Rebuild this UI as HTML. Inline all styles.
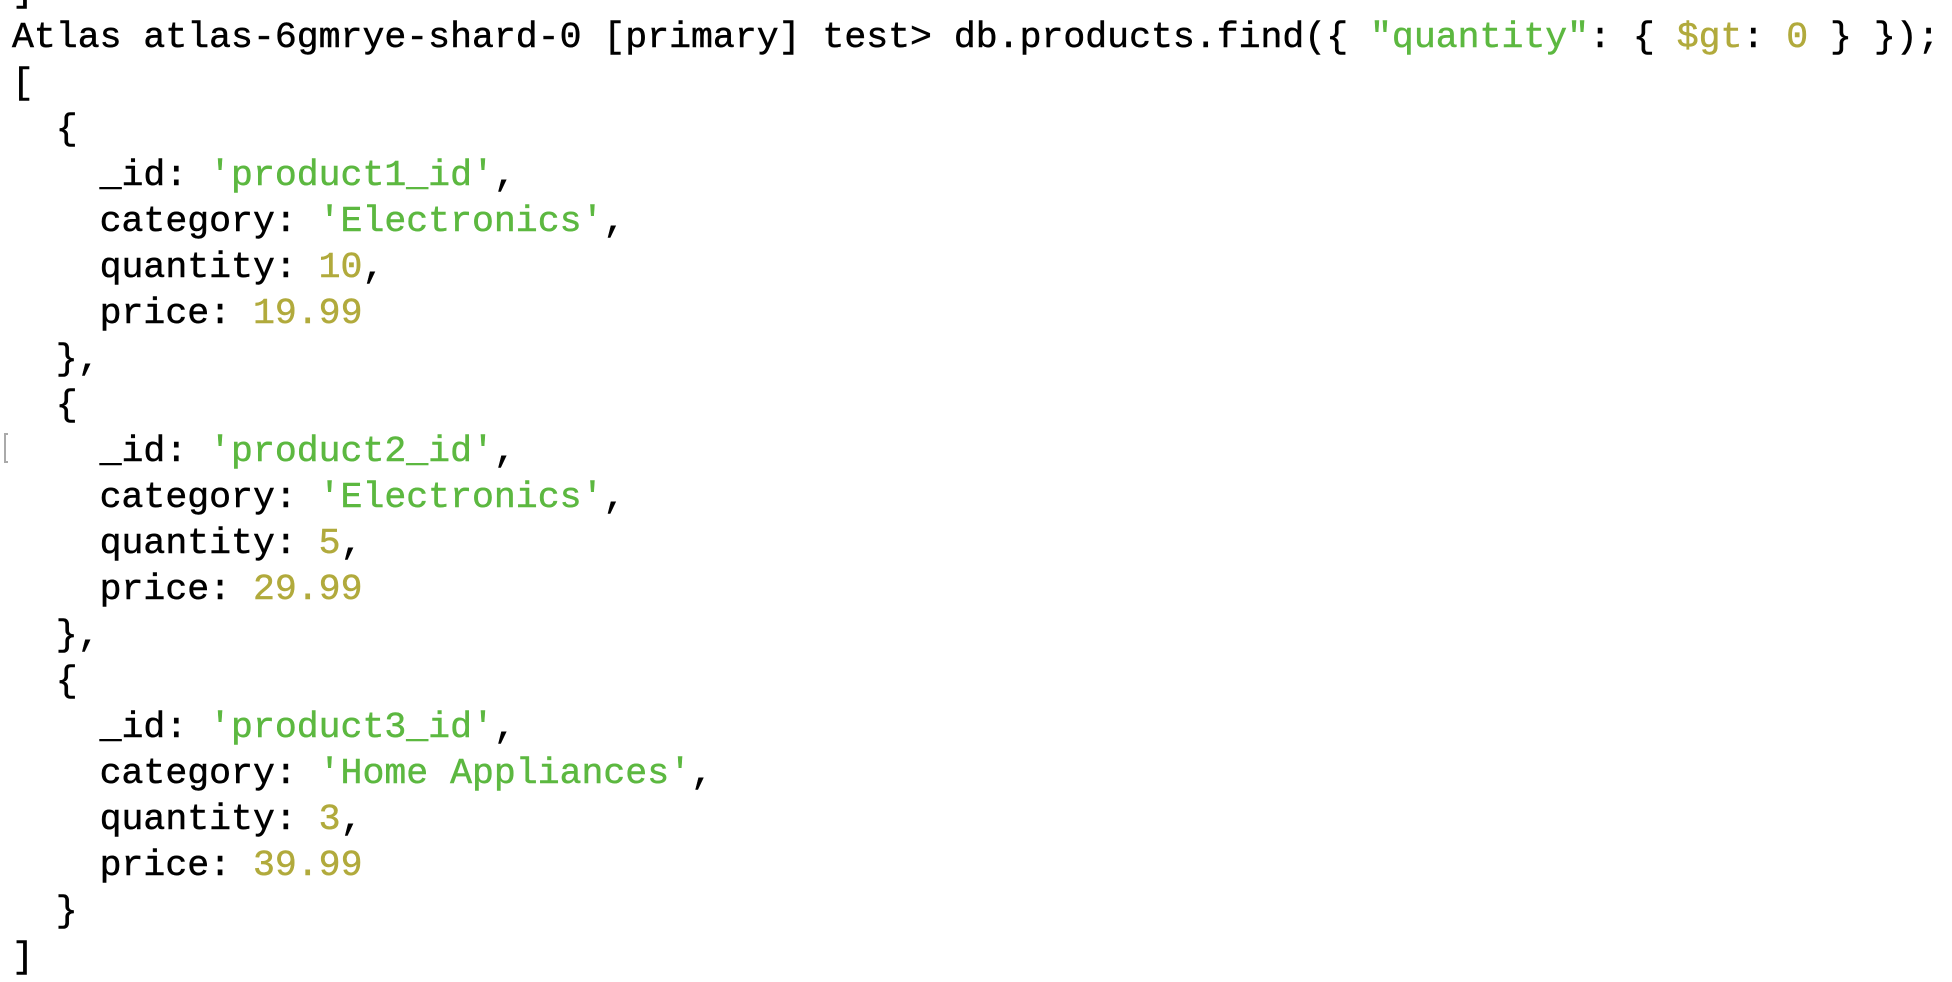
<!DOCTYPE html>
<html><head><meta charset="utf-8"><style>
html,body{margin:0;padding:0;background:#fff;width:1952px;height:982px;overflow:hidden;}
pre{position:absolute;left:12px;top:-31px;margin:0;font-family:"Liberation Mono",monospace;font-size:36.5px;line-height:46px;color:#000;-webkit-text-stroke:0.5px currentColor;}
.g{color:#5cb840}.y{color:#b1aa3c}
.mk{position:absolute;left:4px;top:433px;width:4px;height:30px;border:2px solid #aaa;border-right:none;box-sizing:border-box;}
</style></head><body>
<pre>]
Atlas atlas-6gmrye-shard-0 [primary] test&gt; db.products.find({ <span class="g">"quantity"</span>: { <span class="y">$gt</span>: <span class="y">0</span> } });
[
  {
    _id: <span class="g">'product1_id'</span>,
    category: <span class="g">'Electronics'</span>,
    quantity: <span class="y">10</span>,
    price: <span class="y">19.99</span>
  },
  {
    _id: <span class="g">'product2_id'</span>,
    category: <span class="g">'Electronics'</span>,
    quantity: <span class="y">5</span>,
    price: <span class="y">29.99</span>
  },
  {
    _id: <span class="g">'product3_id'</span>,
    category: <span class="g">'Home Appliances'</span>,
    quantity: <span class="y">3</span>,
    price: <span class="y">39.99</span>
  }
]</pre>
<div class="mk"></div>
</body></html>
